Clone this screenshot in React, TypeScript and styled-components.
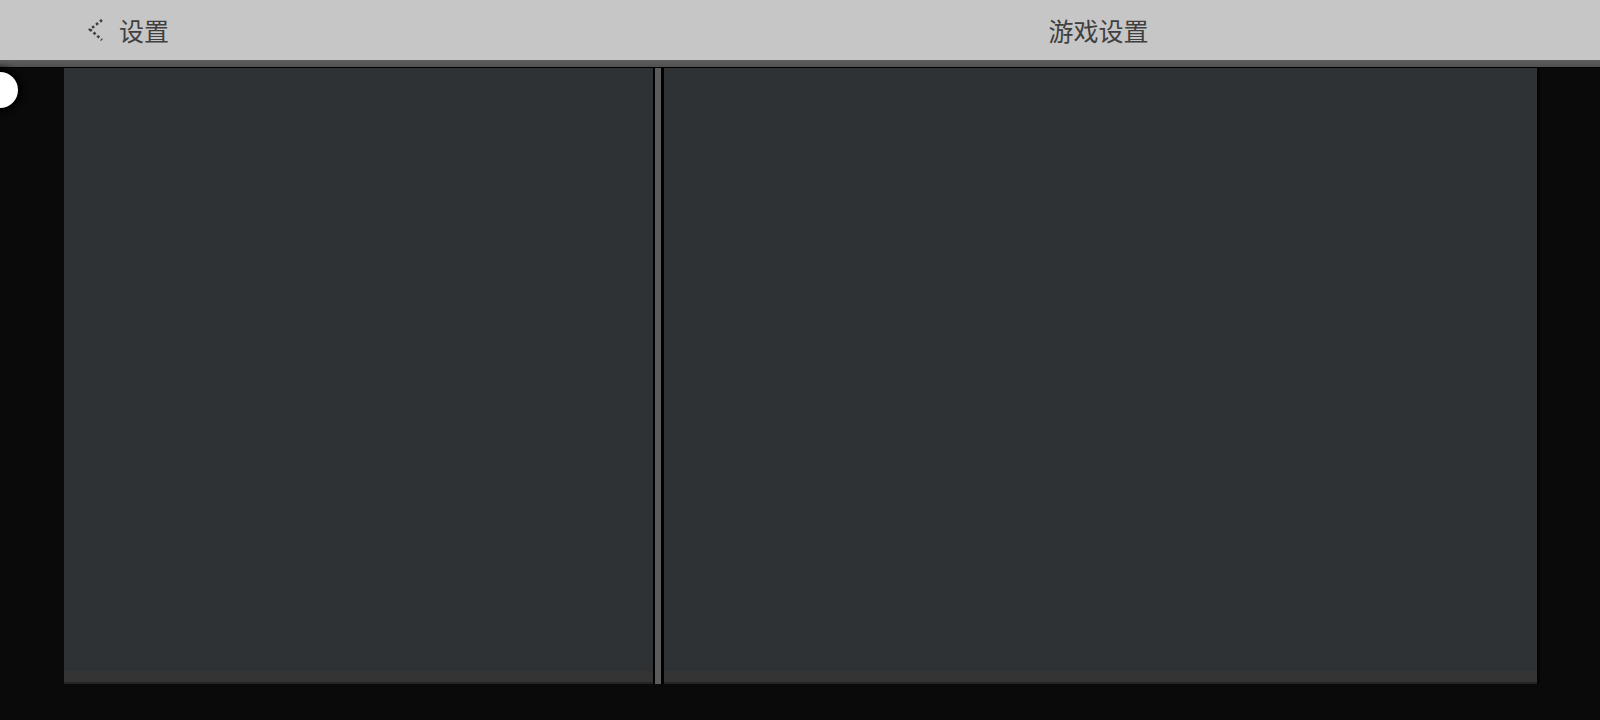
import * as React from "react";
import styled, { createGlobalStyle } from "styled-components";

const Global = createGlobalStyle`
    html, body {
        margin: 0;
        padding: 0;
        background: #0a0a0a;
    }
    body {
        font-family: "Noto Sans CJK SC", "Noto Sans", sans-serif;
    }
`;

const Screen = styled.div`
    position: relative;
    width: 1600px;
    height: 720px;
    overflow: hidden;
    background: #0a0a0a;
    display: flex;
    flex-direction: column;
`;

const Header = styled.div`
    height: 60px;
    background: #c6c6c6;
    display: flex;
    align-items: center;
    padding-left: 64px;
    color: #3f3f3f;
`;

const HeaderShade = styled.div`
    height: 7px;
    background: linear-gradient(#5e5e5e, #505050);
    border-bottom: 1px solid #000;
`;

const BackCell = styled.div`
    width: 600px;
    display: flex;
    align-items: center;
    gap: 15px;
    padding-left: 24px;
    box-sizing: border-box;
    font-size: 25px;
`;

const TitleCell = styled.div`
    width: 869px;
    text-align: center;
    font-size: 25px;
`;

const Body = styled.div`
    display: flex;
    padding-left: 64px;
`;

const Panel = styled.div<{ $w: number }>`
    width: ${p => p.$w}px;
    height: 614px;
    background: #2f3235;
    display: flex;
    flex-direction: column;
    justify-content: flex-end;
    border-bottom: 2px solid #262626;
`;

const PanelFoot = styled.div`
    height: 11px;
    background: #343434;
`;

const Divider = styled.div`
    width: 6px;
    height: 616px;
    background: #5c5c5c;
    border-left: 2px solid #000;
    border-right: 3px solid #000;
`;

const Edge = styled.div`
    width: 3px;
    height: 616px;
    background: #050505;
`;

const Knob = styled.div`
    position: absolute;
    left: -18px;
    top: 72px;
    width: 36px;
    height: 36px;
    border-radius: 50%;
    background: #fff;
    box-shadow: 0 0 6px 4px #000;
`;

function Chevron() {
    return (
        <svg width="16" height="22" viewBox="0 0 16 22">
            <polyline
                points="14,1 2,10.5 14,21"
                fill="none"
                stroke="#3f3f3f"
                strokeWidth="2.6"
                strokeDasharray="2.6 2.4"
            />
        </svg>
    );
}

export default function App() {
    return (
        <>
            <Global />
            <Screen>
                <Header>
                    <BackCell>
                        <Chevron />
                        <span>设置</span>
                    </BackCell>
                    <TitleCell>游戏设置</TitleCell>
                </Header>
                <HeaderShade />
                <Body>
                    <Panel $w={589}>
                        <PanelFoot />
                    </Panel>
                    <Divider />
                    <Panel $w={873}>
                        <PanelFoot />
                    </Panel>
                    <Edge />
                </Body>
                <Knob />
            </Screen>
        </>
    );
}
